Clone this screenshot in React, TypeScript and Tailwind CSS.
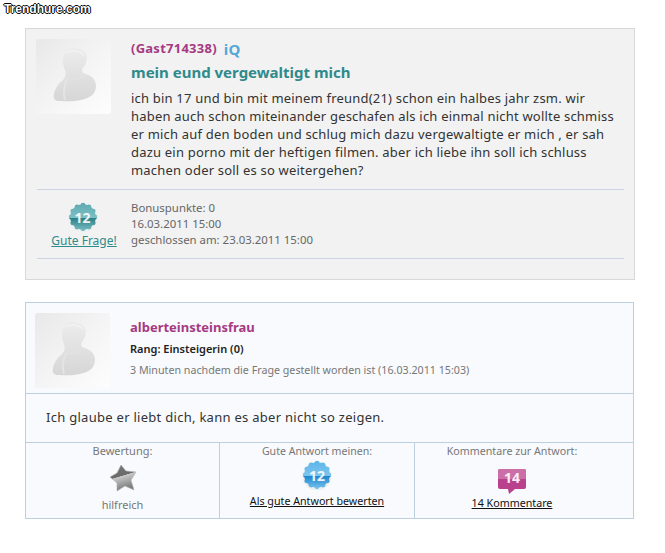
import React from 'react'

function Avatar() {
  return (
    <div className="w-[75px] h-[75px] shrink-0 rounded-[3px] bg-gradient-to-br from-[#e8e8e8] via-[#f4f4f4] to-[#fdfdfd] flex items-center justify-center">
      <svg width="75" height="75" viewBox="0 0 75 75">
        <defs>
          <linearGradient id="bust" x1="0" y1="0" x2="0" y2="1">
            <stop offset="0" stopColor="#ececec" />
            <stop offset="1" stopColor="#d6d6d6" />
          </linearGradient>
        </defs>
        <path d="M31 11C37 8 47 9 50 15C52 20 50 25 47 29C45 32 46 34 50 35C56 37 60 41 60 47C60 54 55 59 45 61C36 63 28 62 23 62C19 62 17 60 18 55C19 49 23 44 27 41C30 38 30 35 29 31C26 25 26 16 31 11Z" fill="url(#bust)" />
        <path d="M31 40c-3 7-4 15-2 21" stroke="#e4e4e4" strokeWidth="2" fill="none" />
        <path d="M31 40c6 2 12 1 17-4" stroke="#e4e4e4" strokeWidth="1" fill="none" />
        <path d="M30 14c5-3 13-3 18 2" stroke="#f2f2f2" strokeWidth="1.5" fill="none" />
      </svg>
    </div>
  )
}

function Badge({ value, top, bottom, light }: { value: string; top: string; bottom: string; light: string }) {
  const bumps = Array.from({ length: 12 }, (_, i) => {
    const a = (i / 12) * Math.PI * 2
    return { x: 15 + Math.cos(a) * 11.8, y: 15 + Math.sin(a) * 11.8 }
  })
  const id = `badge-${top.slice(1)}`
  return (
    <div className="relative w-[30px] h-[30px]">
      <svg width="30" height="30" viewBox="0 0 30 30">
        <defs>
          <linearGradient id={id} gradientUnits="userSpaceOnUse" x1="0" y1="1" x2="0" y2="29">
            <stop offset="0" stopColor={top} />
            <stop offset="0.52" stopColor={light} />
            <stop offset="0.54" stopColor={bottom} />
            <stop offset="1" stopColor={light} />
          </linearGradient>
        </defs>
        <circle cx="15" cy="16" r="14.5" fill="#f0f0f0" />
        <g fill={`url(#${id})`}>
          <circle cx="15" cy="15" r="12.8" />
          {bumps.map((b, i) => (
            <circle key={i} cx={b.x} cy={b.y} r="2.4" />
          ))}
        </g>
      </svg>
      <span className="absolute inset-0 flex items-center justify-center text-[14px] font-bold text-white/90">{value}</span>
    </div>
  )
}

function Star() {
  return (
    <svg width="30" height="30" viewBox="0 0 30 30">
      <defs>
        <linearGradient id="star" x1="0" y1="0" x2="0.3" y2="1">
          <stop offset="0" stopColor="#777" />
          <stop offset="0.5" stopColor="#6a6a6a" />
          <stop offset="0.52" stopColor="#c8c8c8" />
          <stop offset="1" stopColor="#7c7c7c" />
        </linearGradient>
      </defs>
      <path d="M13 2L18 8L28 9L23 17L26 27L17 23L9 28L9 20L2 14L9 10Z" fill="url(#star)" stroke="#b0b0b0" strokeWidth="0.6" strokeLinejoin="round" />
    </svg>
  )
}

function CommentBubble() {
  return (
    <div className="relative w-[28px] h-[25px]">
      <svg width="28" height="25" viewBox="0 0 28 25">
        <rect x="0" y="0" width="28" height="20" rx="2" fill="#b8408c" />
        <path d="M0 2a2 2 0 0 1 2-2h24a2 2 0 0 1 2 2v8H0z" fill="#cc6fa8" />
        <path d="M10 20h7l-6 5z" fill="#b8408c" />
      </svg>
      <span className="absolute left-0 right-0 top-0 text-center text-[14px] leading-[18px] font-bold text-white/90">14</span>
    </div>
  )
}

export default function App() {
  return (
    <div className="relative w-[665px] h-[553px] bg-white font-['Noto_Sans',sans-serif] text-[12px]">
      <div className="absolute left-[4px] top-[1px] font-['Liberation_Sans',sans-serif] text-[12px] leading-[16px] font-bold text-white [text-shadow:1px_0_0_#000,-1px_0_0_#000,0_1px_0_#000,0_-1px_0_#000]">
        Trendhure.com
      </div>

      <div className="pt-[28px] pl-[25px] flex flex-col gap-[22px]">
        {/* Frage */}
        <div className="w-[610px] h-[252px] bg-[#f2f2f2] border border-[#d8d8d8] pl-[11px] pr-[10px] pt-[10px]">
          <div className="flex gap-[20px] h-[150px] -ml-[1px]">
            <Avatar />
            <div className="flex-1">
              <div className="flex items-center gap-[7px] h-[20px] text-[13px] tracking-[0.25px] font-bold text-[#a53a83]">
                (Gast714338)
                <span className="text-[15px] text-[#55a8d8]">iQ</span>
              </div>
              <div className="mt-[2px] text-[15px] leading-[22px] font-bold text-[#2f8a8c]">mein eund vergewaltigt mich</div>
              <p className="mt-[6px] text-[13px] leading-[18px] tracking-[0.2px] text-[#333]">
                ich bin 17 und bin mit meinem freund(21) schon ein halbes jahr zsm. wir
                <br />
                haben auch schon miteinander geschafen als ich einmal nicht wollte schmiss
                <br />
                er mich auf den boden und schlug mich dazu vergewaltigte er mich , er sah
                <br />
                dazu ein porno mit der heftigen filmen. aber ich liebe ihn soll ich schluss
                <br />
                machen oder soll es so weitergehen?
              </p>
            </div>
          </div>
          <div className="border-t border-[#ccd4e4] border-b h-[70px] flex">
            <div className="w-[94px] flex flex-col items-center pt-[12px]">
              <div className="-ml-[3px]">
                <Badge value="12" top="#5fa8b0" bottom="#2a7f86" light="#7cc0c6" />
              </div>
              <a className="mt-[1px] text-[12px] leading-[16px] text-[#2f8a8c] underline">Gute Frage!</a>
            </div>
            <div className="pt-[10px] text-[11.4px] leading-[16px] text-[#666]">
              <div>Bonuspunkte: 0</div>
              <div>16.03.2011 15:00</div>
              <div>geschlossen am: 23.03.2011 15:00</div>
            </div>
          </div>
        </div>

        {/* Antwort */}
        <div className="w-[609px] h-[217px] bg-[#f8fafd] border border-[#bdd0df] flex flex-col">
          <div className="h-[91px] flex gap-[20px] pl-[9px] pt-[10px] border-b border-[#bdd0df]">
            <Avatar />
            <div className="pt-[4px]">
              <div className="text-[13px] leading-[20px] font-bold text-[#a53a83]">alberteinsteinsfrau</div>
              <div className="mt-[3px] text-[11px] leading-[18px] font-semibold text-[#222]">Rang: Einsteigerin (0)</div>
              <div className="mt-[3px] text-[10.7px] leading-[18px] text-[#777]">3 Minuten nachdem die Frage gestellt worden ist (16.03.2011 15:03)</div>
            </div>
          </div>
          <div className="h-[49px] pl-[20px] flex items-center text-[13px] tracking-[0.28px] text-[#333] border-b border-[#bdd0df]">
            Ich glaube er liebt dich, kann es aber nicht so zeigen.
          </div>
          <div className="flex-1 grid grid-cols-[194px_195px_1fr] text-[11px] text-[#777]">
            <div className="flex flex-col items-center border-r border-[#bdd0df]">
              <div className="leading-[16px]">Bewertung:</div>
              <div className="mt-[4px]">
                <Star />
              </div>
              <div className="mt-[4px] leading-[16px]">hilfreich</div>
            </div>
            <div className="flex flex-col items-center border-r border-[#bdd0df]">
              <div className="text-[10.6px] leading-[16px]">Gute Antwort meinen:</div>
              <div className="mt-[1px]">
                <Badge value="12" top="#5cb6ea" bottom="#1c86cc" light="#7cc4ee" />
              </div>
              <a className="mt-[3px] text-[10.7px] leading-[16px] text-[#111] underline">Als gute Antwort bewerten</a>
            </div>
            <div className="flex flex-col items-center pr-[24px]">
              <div className="text-[10.7px] leading-[16px]">Kommentare zur Antwort:</div>
              <div className="mt-[10px]">
                <CommentBubble />
              </div>
              <a className="mt-[1px] text-[10.7px] leading-[16px] text-[#111] underline">14 Kommentare</a>
            </div>
          </div>
        </div>
      </div>
    </div>
  )
}
